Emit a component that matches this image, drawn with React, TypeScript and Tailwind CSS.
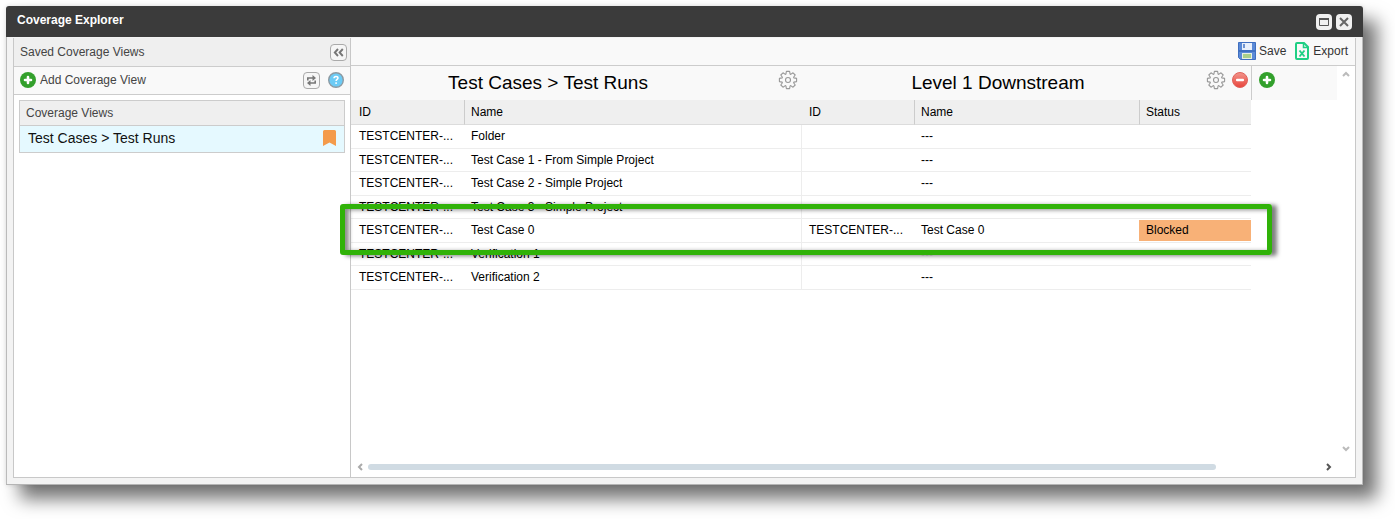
import React from "react";

type Row = { name: string; id2?: string; name2: string; status?: string; marked?: boolean };

const ITEM_ID = "TESTCENTER-...";

const rows: Row[] = [
  { name: "Folder", name2: "---" },
  { name: "Test Case 1 - From Simple Project", name2: "---" },
  { name: "Test Case 2 - Simple Project", name2: "---" },
  { name: "Test Case 3 - Simple Project", name2: "---" },
  { name: "Test Case 0", id2: ITEM_ID, name2: "Test Case 0", status: "Blocked", marked: true },
  { name: "Verification 1", name2: "---" },
  { name: "Verification 2", name2: "---" },
];

function PlusIcon() {
  return (
    <svg width="16" height="16" viewBox="0 0 16 16" aria-hidden="true">
      <circle cx="8" cy="8" r="8" fill="#33a02c" />
      <path d="M8 5v6M5 8h6" stroke="#fff" strokeWidth="2.6" strokeLinecap="round" />
    </svg>
  );
}

function MinusIcon() {
  return (
    <svg width="16" height="16" viewBox="0 0 16 16" aria-hidden="true">
      <defs>
        <linearGradient id="minusFill" x1="0" y1="0" x2="0" y2="1">
          <stop offset="0" stopColor="#f2958c" />
          <stop offset="1" stopColor="#e8453c" />
        </linearGradient>
      </defs>
      <circle cx="8" cy="8" r="7.5" fill="url(#minusFill)" stroke="#e0625b" strokeWidth="1" />
      <rect x="4" y="6.7" width="8" height="2.6" rx="1" fill="#fff" />
    </svg>
  );
}

function HelpIcon() {
  return (
    <svg width="16" height="16" viewBox="0 0 16 16" aria-hidden="true">
      <circle cx="8" cy="8" r="7.3" fill="#6ccbf5" stroke="#8d9aa2" strokeWidth="1.4" />
      <path d="M6 6.3c0-1.3.9-1.9 2-1.9s2 .7 2 1.7c0 1.300-1.900 1.300-1.900 2.900" fill="none" stroke="#fff" strokeWidth="1.5" />
      <rect x="7.300" y="10.300" width="1.600" height="1.600" fill="#fff" />
    </svg>
  );
}

function GearIcon() {
  return (
    <svg width="20" height="20" viewBox="-10 -10 20 20" fill="none" stroke="#999" strokeWidth="1.1" strokeLinejoin="round" aria-hidden="true">
      <path d="M-1.600 -8.600H1.600L2.100 -5.900L2.700 -5.600L5.000 -7.200L7.200 -5.000L5.600 -2.700L5.900 -2.100L8.600 -1.600V1.600L5.900 2.100L5.600 2.700L7.200 5.000L5.000 7.200L2.700 5.600L2.100 5.900L1.600 8.600H-1.600L-2.100 5.900L-2.700 5.600L-5.000 7.200L-7.200 5.000L-5.600 2.700L-5.900 2.100L-8.600 1.600V-1.600L-5.900 -2.100L-5.600 -2.700L-7.200 -5.000L-5.000 -7.200L-2.700 -5.600L-2.100 -5.900Z" />
      <circle r="2.500" />
    </svg>
  );
}

function SaveIcon() {
  return (
    <svg width="18" height="18" viewBox="0 0 18 18" aria-hidden="true">
      <path d="M.5.5h17v17h-15l-2-2z" fill="#5b8ad6" stroke="#3f6fc0" />
      <rect x="4" y="1" width="10" height="7" fill="#e9f0fb" />
      <rect x="5" y="2" width="2" height="4" fill="#6f94d2" />
      <rect x="1" y="8" width="16" height="2" fill="#3f6fc0" />
      <rect x="4" y="11" width="10" height="6" fill="#e8efe0" />
      <rect x="5" y="12" width="8" height="4" fill="#a9cf8a" />
    </svg>
  );
}

function ExportIcon() {
  return (
    <svg width="14" height="18" viewBox="0 0 14 18" fill="none" stroke="#1fcf84" aria-hidden="true">
      <path d="M1 2q0-1 1-1h7l4 4v11q0 1-1 1H2q-1 0-1-1z" strokeWidth="2" />
      <path d="M8.500 1v4.500H13" strokeWidth="1.500" />
      <path d="M4.500 8.500l5 6M9.500 8.500l-5 6" strokeWidth="1.900" />
    </svg>
  );
}

function Chevron({ d, color }: { d: string; color: string }) {
  return (
    <svg width="8" height="8" viewBox="0 0 8 8" fill="none" stroke={color} strokeWidth="2" aria-hidden="true">
      <path d={d} />
    </svg>
  );
}

const toolButton = "flex size-[17px] items-center justify-center rounded border border-[#aaa] bg-[#f6f6f6]";
const windowButton = "flex size-4 items-center justify-center rounded bg-[#f0f0f0]";
const headCell = "h-[25px] border-b border-[#dcdcdc] bg-[#efefef] px-2 text-left font-normal";
const headCellDivided = "h-[25px] border-b border-l border-b-[#dcdcdc] border-l-[#ccc] bg-[#efefef] px-[6px] text-left font-normal";
const bodyCell = "border-b border-[#ededed] px-[7px] pb-px";

function GroupHeader({ title, removable }: { title: string; removable?: boolean }) {
  return (
    <div className="flex h-[34px] w-[450px] shrink-0 items-center">
      <h2 className="flex-1 text-center text-[19px] leading-6">{title}</h2>
      <div className="flex w-14 shrink-0 items-center justify-end gap-[6px] pb-[6px] pr-[3px]">
        <button aria-label="Configure level"><GearIcon /></button>
        {removable && <button aria-label="Remove level"><MinusIcon /></button>}
      </div>
    </div>
  );
}

function Sidebar() {
  return (
    <aside className="flex w-[337px] shrink-0 flex-col border-r border-[#c8c8c8] text-[#444]">
      <div className="flex h-[29px] items-center justify-between border-b border-[#ccc] bg-[#efefef] pl-[6px] pr-[3px]">
        <h2>Saved Coverage Views</h2>
        <button aria-label="Collapse panel" className={toolButton}>
          <svg width="11" height="9" viewBox="0 0 11 9" fill="none" stroke="#777" strokeWidth="1.900" aria-hidden="true">
            <path d="M5 1L1.800 4.500L5 8M9.800 1L6.600 4.500L9.800 8" />
          </svg>
        </button>
      </div>
      <div className="flex h-7 items-center border-b border-[#ccc] bg-[#f9f9f9] px-[6px] pb-px">
        <button className="flex flex-1 items-center gap-1">
          <PlusIcon />
          Add Coverage View
        </button>
        <button aria-label="Refresh" className={toolButton}>
          <svg width="11" height="11" viewBox="0 0 11 11" fill="none" stroke="#777" strokeWidth="1.600" aria-hidden="true">
            <path d="M1.800 5.500V3H7M9.200 5.500V8H4" />
            <path d="M6.500 0L10 3L6.500 6zM4.500 5L1 8l3.500 3z" fill="#777" stroke="none" />
          </svg>
        </button>
        <button aria-label="Help" className="ml-2"><HelpIcon /></button>
      </div>
      <div className="mx-[5px] mt-[5px] border border-[#ccc]">
        <h3 className="h-[25px] border-b border-[#ccc] bg-[#efefef] px-[6px] leading-6">Coverage Views</h3>
        <a href="#view" className="flex h-[26px] items-center justify-between bg-[#e5f9ff] px-2 pb-[2px] text-sm text-[#111]">
          Test Cases &gt; Test Runs
          <svg width="13" height="16" viewBox="0 0 13 16" aria-hidden="true">
            <path d="M1.500 0h10Q13 0 13 1.500V16L6.500 12.500L0 16V1.500Q0 0 1.500 0z" fill="#f49b4b" />
          </svg>
        </a>
      </div>
    </aside>
  );
}

function CoverageTable() {
  return (
    <table className="w-[900px] table-fixed border-separate border-spacing-0">
      <colgroup>
        <col className="w-[113px]" />
        <col className="w-[337px]" />
        <col className="w-[113px]" />
        <col className="w-[225px]" />
        <col className="w-[112px]" />
      </colgroup>
      <thead>
        <tr>
          <th className={headCell}>ID</th>
          <th className={headCellDivided}>Name</th>
          <th className={headCell}>ID</th>
          <th className={headCellDivided}>Name</th>
          <th className={headCellDivided}>Status</th>
        </tr>
      </thead>
      <tbody>
        {rows.map((r) => (
          <tr key={r.name} className="relative odd:h-6 even:h-[23px]">
            <td className="border-b border-[#ededed] px-2 pb-px">
              {ITEM_ID}
              {r.marked && (
                <div className="pointer-events-none absolute -top-[15px] -right-[21px] -bottom-[12px] -left-[11px] z-10 rounded-[3px] border-5 border-[#30b208] shadow-[5px_1px_4px_0px_rgba(0,0,0,0.5),inset_4px_1px_4px_0px_rgba(0,0,0,0.45)]" />
              )}
            </td>
            <td className={bodyCell}>{r.name}</td>
            <td className={bodyCell + " border-l border-l-[#ededed]"}>{r.id2}</td>
            <td className={bodyCell}>{r.name2}</td>
            <td className="border-b border-[#ededed] p-0">
              {r.status && <div className="h-[21px] bg-[#f8b177] px-[7px] leading-5">{r.status}</div>}
            </td>
          </tr>
        ))}
      </tbody>
    </table>
  );
}

function Workspace() {
  return (
    <main className="flex min-w-0 flex-1 flex-col text-black">
      <div className="flex h-7 items-center justify-end gap-[9px] border-b border-[#ccc] bg-[#f9f9f9] pb-px pr-[7px] text-[#333]">
        <button className="flex items-center gap-[3px]"><SaveIcon />Save</button>
        <button className="flex items-center gap-1"><ExportIcon />Export</button>
      </div>
      <div className="flex flex-1">
        <div className="flex min-w-0 flex-1 flex-col">
          <div className="flex bg-[#f9f9f9]">
            <GroupHeader title="Test Cases > Test Runs" />
            <GroupHeader title="Level 1 Downstream" removable />
            <div className="flex-1 border-l border-[#ccc] pl-[7px] pt-[6px]">
              <button aria-label="Add level"><PlusIcon /></button>
            </div>
          </div>
          <CoverageTable />
          <div className="mt-auto flex h-[19px] items-center gap-1 pb-px pl-[5px] pr-1">
            <Chevron d="M6 1L3 4l3 3" color="#aaa" />
            <div className="flex-1">
              <div className="h-[6px] w-[89%] rounded-full bg-[#d0dbe3]" />
            </div>
            <Chevron d="M2 1l3 3l-3 3" color="#555" />
          </div>
        </div>
        <div className="flex w-[18px] flex-col items-center justify-between pb-6 pt-1">
          <Chevron d="M1 6l3-3l3 3" color="#bbb" />
          <Chevron d="M1 2l3 3l3-3" color="#bbb" />
        </div>
      </div>
    </main>
  );
}

export default function App() {
  return (
    <div className="flex min-h-screen bg-white pb-[34px] pl-[6px] pr-8 pt-[6px] font-['Liberation_Sans',Arial,sans-serif] text-xs">
      <section className="flex min-w-0 flex-1 flex-col rounded-t-[3px] border-b border-[#b5b5b5] bg-[#f3f3f3] shadow-[14px_14px_18px_0px_rgba(0,0,0,0.55),0_0_5px_rgba(0,0,0,0.12)]">
        <header className="flex h-[31px] items-center justify-between rounded-t-[3px] bg-[#3b3b3b] pl-[11px] pr-[11px]">
          <h1 className="pb-1 font-bold text-white">Coverage Explorer</h1>
          <div className="flex gap-1">
            <button aria-label="Maximize" className={windowButton}>
              <svg width="10" height="8" viewBox="0 0 10 8" aria-hidden="true">
                <path d="M.5.5h9v7h-9z" fill="none" stroke="#555" />
                <path d="M0 1h10" stroke="#555" strokeWidth="2" />
              </svg>
            </button>
            <button aria-label="Close" className={windowButton}>
              <svg width="10" height="10" viewBox="0 0 10 10" aria-hidden="true">
                <path d="M1 1l8 8M9 1l-8 8" stroke="#666" strokeWidth="2" />
              </svg>
            </button>
          </div>
        </header>
        <div className="flex flex-1 border-l border-r border-[#bbb] px-[6px] pb-[6px] pt-px">
          <div className="flex min-w-0 flex-1 border border-t-0 border-[#c8c8c8] bg-white">
            <Sidebar />
            <Workspace />
          </div>
        </div>
      </section>
    </div>
  );
}
